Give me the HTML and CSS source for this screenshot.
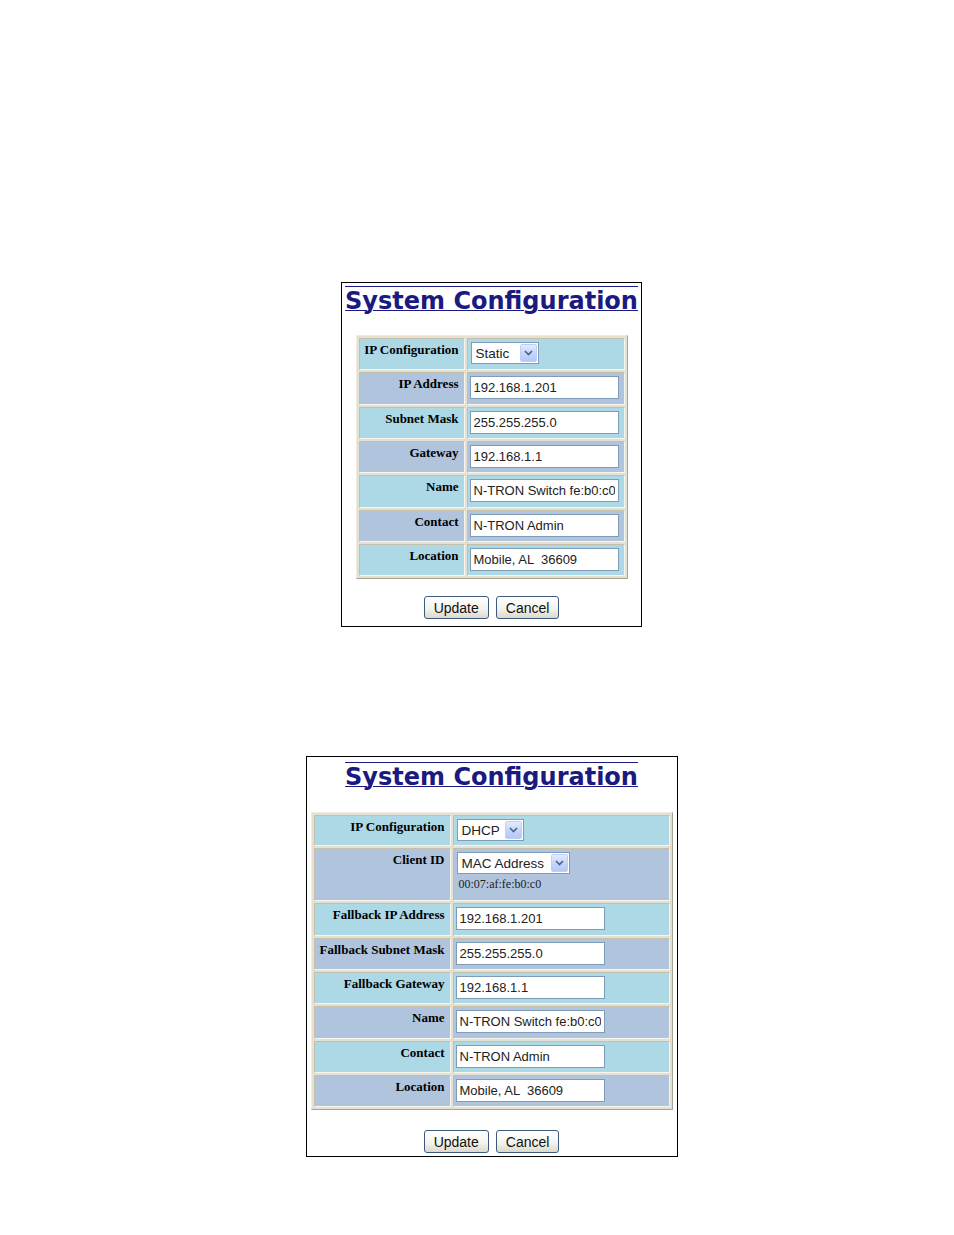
FILE: index.html
```html
<!DOCTYPE html>
<html>
<head>
<meta charset="utf-8">
<title>System Configuration</title>
<link rel="stylesheet" href="styles.css">
</head>
<body>
<div class="page">
  <div class="panel panel-static">
    <h1 class="title">System Configuration</h1>
    <table class="form form-static">
      <tr class="row-a">
        <td class="label">IP Configuration</td>
        <td class="field">
          <div class="select select-static"><span class="select-text">Static</span><span class="select-btn"><svg width="9" height="6" viewBox="0 0 9 6"><path d="M1 1 L4.5 4.5 L8 1" fill="none" stroke="#4d6185" stroke-width="1.6"/></svg></span></div>
        </td>
      </tr>
      <tr class="row-b"><td class="label">IP Address</td><td class="field"><input type="text" value="192.168.1.201"></td></tr>
      <tr class="row-a"><td class="label">Subnet Mask</td><td class="field"><input type="text" value="255.255.255.0"></td></tr>
      <tr class="row-b"><td class="label">Gateway</td><td class="field"><input type="text" value="192.168.1.1"></td></tr>
      <tr class="row-a"><td class="label">Name</td><td class="field"><input type="text" value="N-TRON Switch fe:b0:c0"></td></tr>
      <tr class="row-b"><td class="label">Contact</td><td class="field"><input type="text" value="N-TRON Admin"></td></tr>
      <tr class="row-a"><td class="label">Location</td><td class="field"><input type="text" value="Mobile, AL  36609"></td></tr>
    </table>
    <div class="buttons buttons-static">
      <button class="btn">Update</button>
      <button class="btn">Cancel</button>
    </div>
  </div>

  <div class="panel panel-dhcp">
    <h1 class="title">System Configuration</h1>
    <table class="form form-dhcp">
      <tr class="row-a row-short">
        <td class="label">IP Configuration</td>
        <td class="field">
          <div class="select select-dhcp"><span class="select-text">DHCP</span><span class="select-btn"><svg width="9" height="6" viewBox="0 0 9 6"><path d="M1 1 L4.5 4.5 L8 1" fill="none" stroke="#4d6185" stroke-width="1.6"/></svg></span></div>
        </td>
      </tr>
      <tr class="row-b row-tall">
        <td class="label">Client ID</td>
        <td class="field">
          <div class="select select-mac"><span class="select-text">MAC Address</span><span class="select-btn"><svg width="9" height="6" viewBox="0 0 9 6"><path d="M1 1 L4.5 4.5 L8 1" fill="none" stroke="#4d6185" stroke-width="1.6"/></svg></span></div>
          <div class="mac">00:07:af:fe:b0:c0</div>
        </td>
      </tr>
      <tr class="row-a"><td class="label">Fallback IP Address</td><td class="field"><input type="text" value="192.168.1.201"></td></tr>
      <tr class="row-b"><td class="label">Fallback Subnet Mask</td><td class="field"><input type="text" value="255.255.255.0"></td></tr>
      <tr class="row-a"><td class="label">Fallback Gateway</td><td class="field"><input type="text" value="192.168.1.1"></td></tr>
      <tr class="row-b"><td class="label">Name</td><td class="field"><input type="text" value="N-TRON Switch fe:b0:c0"></td></tr>
      <tr class="row-a"><td class="label">Contact</td><td class="field"><input type="text" value="N-TRON Admin"></td></tr>
      <tr class="row-b"><td class="label">Location</td><td class="field"><input type="text" value="Mobile, AL  36609"></td></tr>
    </table>
    <div class="buttons buttons-dhcp">
      <button class="btn">Update</button>
      <button class="btn">Cancel</button>
    </div>
  </div>
</div>
</body>
</html>
```

FILE: styles.css
```css
html, body {
  margin: 0;
  padding: 0;
  background: #ffffff;
}

.page {
  display: flex;
  flex-direction: column;
  align-items: center;
  gap: 129px;
  padding: 282px 0 0 29px;
}

.panel {
  box-sizing: border-box;
  border: 1px solid #000000;
  display: flex;
  flex-direction: column;
  align-items: center;
  background: #ffffff;
}

.panel-static {
  width: 301px;
  padding: 4px 0 7px;
}

.panel-dhcp {
  width: 372px;
  padding: 6px 0 3px;
}

.title {
  margin: 0;
  font-family: "DejaVu Sans", Verdana, sans-serif;
  font-weight: bold;
  font-size: 24px;
  line-height: normal;
  color: #1a1a80;
  text-decoration: underline overline;
  text-decoration-thickness: 1px;
  white-space: nowrap;
}

.form {
  border-collapse: separate;
  border-spacing: 2px;
  border: 1px solid;
  border-color: #eeece2 #a8a490 #a8a490 #eeece2;
  background: #e4e1d3;
}

.form-static {
  width: 272px;
  margin-top: 20px;
}

.form-dhcp {
  width: 362px;
  margin-top: 21px;
}

.form td {
  box-sizing: border-box;
  height: 32.33px;
  border: 1px solid;
  border-color: #c4c0ac #f6f5ef #f6f5ef #c4c0ac;
  padding: 3px 3px 3px 2px;
  vertical-align: top;
}

.form .row-short td {
  height: 31px;
}

.form .row-tall td {
  height: 53px;
}

.row-a td {
  background: #add8e6;
}

.row-b td {
  background: #b0c4de;
}

.form .label {
  text-align: right;
  padding-right: 5px;
  font-family: "Liberation Serif", "Times New Roman", serif;
  font-weight: bold;
  font-size: 13px;
  color: #000000;
  white-space: nowrap;
}

.form-static .label {
  width: 106px;
}

.form-dhcp .label {
  width: 137px;
}

.field input {
  display: block;
  box-sizing: border-box;
  width: 149px;
  height: 23px;
  margin: 0;
  border: 1px solid #7f9db9;
  padding: 0 3px;
  background: #ffffff;
  font-family: "Liberation Sans", Arial, sans-serif;
  font-size: 13px;
  color: #222222;
  outline: none;
}

.select {
  box-sizing: border-box;
  display: flex;
  align-items: center;
  height: 22px;
  margin: 0 0 1px 1px;
  border: 1px solid #7f9db9;
  padding: 1px;
  background: #ffffff;
  font-family: "Liberation Sans", Arial, sans-serif;
  font-size: 13.5px;
  color: #222222;
}

.select-static {
  width: 68px;
}

.select-dhcp {
  width: 67px;
}

.select-mac {
  width: 113px;
}

.select-text {
  flex: 1;
  padding-left: 3px;
  white-space: nowrap;
}

.select-btn {
  box-sizing: border-box;
  width: 17px;
  height: 18px;
  border: 1px solid #bccffb;
  border-radius: 2px;
  background: linear-gradient(#e3ebfe, #c6d6fc 50%, #b4c8f8);
  display: flex;
  align-items: center;
  justify-content: center;
}

.mac {
  margin: 2px 0 2px 3px;
  line-height: 16px;
  font-family: "Liberation Serif", "Times New Roman", serif;
  font-size: 12px;
  color: #222222;
}

.buttons {
  display: flex;
  gap: 7px;
  justify-content: center;
}

.buttons-static {
  margin-top: 17px;
}

.buttons-dhcp {
  margin-top: 20px;
}

.btn {
  box-sizing: border-box;
  height: 23px;
  margin: 0;
  padding: 0 9px;
  border: 1px solid #3e5a80;
  border-radius: 3px;
  background: linear-gradient(#ffffff, #f4f4ee 55%, #dcd9cc);
  font-family: "Liberation Sans", Arial, sans-serif;
  font-size: 14px;
  color: #111111;
}
```
